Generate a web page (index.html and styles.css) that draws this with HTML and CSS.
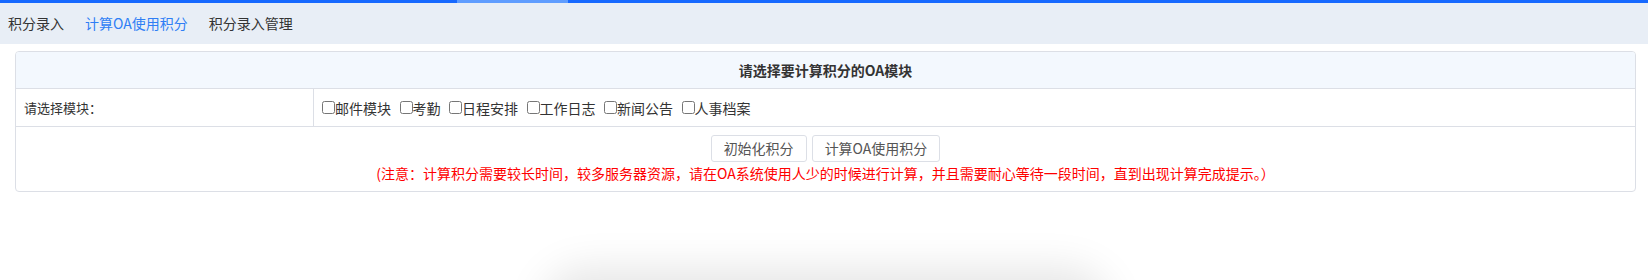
FILE: index.html
```html
<!DOCTYPE html>
<html lang="zh-CN">

<head>
	<meta charset="utf-8">
	<title>计算OA使用积分</title>
	<meta name="viewport" content="width=device-width, initial-scale=1">
	<link rel="stylesheet" href="styles.css">
</head>

<body>
	<div class="loadbar"></div>
	<nav class="tabs">
		<a href="#">积分录入</a>
		<a href="#" class="active">计算OA使用积分</a>
		<a href="#">积分录入管理</a>
	</nav>

	<div class="panel">
		<div class="panel-head">请选择要计算积分的OA模块</div>
		<div class="field-row">
			<div class="field-label">请选择模块：</div>
			<div class="field-value">
				<label><input type="checkbox">邮件模块</label>
				<label><input type="checkbox">考勤</label>
				<label><input type="checkbox">日程安排</label>
				<label><input type="checkbox">工作日志</label>
				<label><input type="checkbox">新闻公告</label>
				<label><input type="checkbox">人事档案</label>
			</div>
		</div>
		<div class="actions">
			<div class="buttons">
				<button type="button">初始化积分</button>
				<button type="button">计算OA使用积分</button>
			</div>
			<p class="notice">(注意：计算积分需要较长时间，较多服务器资源，请在OA系统使用人少的时候进行计算，并且需要耐心等待一段时间，直到出现计算完成提示。）</p>
		</div>
	</div>

	<div class="fold">
		<div class="fold-box"></div>
	</div>
</body>

</html>
```

FILE: styles.css
```css
*,
*::before,
*::after {
	box-sizing: border-box;
}

:root {
	--blue: #1769ff;
	--line: #dcdfe6;
	--text: #333;
}

body {
	margin: 0;
	font-family: "Noto Sans CJK SC", "Liberation Sans", sans-serif;
	font-size: 14px;
	color: var(--text);
	background: #fff;
	overflow: hidden;
}

/* top progress strip */
.loadbar {
	height: 3px;
	background: linear-gradient(to right,
			var(--blue) 457px,
			#5f9dff 457px 568px,
			var(--blue) 568px);
}

.tabs {
	display: flex;
	height: 41px;
	padding-left: 8px;
	background: #e8eef6;

	a {
		margin-right: 21px;
		line-height: 41px;
		color: var(--text);
		text-decoration: none;
	}

	.active {
		color: #2f7ef5;
	}
}

.panel {
	margin: 7px 12px 0 15px;
	border: 1px solid var(--line);
	border-radius: 4px;
	overflow: hidden;
}

.panel-head {
	height: 37px;
	line-height: 36px;
	border-bottom: 1px solid var(--line);
	background: #f3f8fe;
	text-align: center;
	font-weight: bold;
}

.field-row {
	display: grid;
	grid-template-columns: 298px 1fr;
	height: 38px;
	border-bottom: 1px solid var(--line);
}

.field-label {
	padding-left: 8px;
	border-right: 1px solid var(--line);
	font-size: 13px;
	line-height: 37px;
}

.field-value {
	display: flex;
	align-items: center;
	gap: 8.5px;
	padding-left: 8px;

	label {
		display: inline-flex;
		align-items: center;
		line-height: 20px;
	}

	input {
		width: 13px;
		height: 13px;
		margin: 0;
	}
}

.actions {
	padding: 8px 0;
	text-align: center;
}

.buttons {
	display: flex;
	justify-content: center;
	gap: 5px;

	button {
		height: 27px;
		padding: 0 12px;
		border: 1px solid var(--line);
		border-radius: 3px;
		background: #fff;
		color: #555;
		font: inherit;
		line-height: 25px;
		cursor: pointer;
	}
}

.notice {
	margin: 1px 0 0;
	line-height: 20px;
	color: #f00;
}

/* shadow of a box sitting just below the fold */
.fold {
	position: absolute;
	left: 0;
	right: 0;
	bottom: 0;
	height: 70px;
	overflow: hidden;
}

.fold-box {
	width: 540px;
	height: 100px;
	margin: 72px 0 0 556px;
	border-radius: 30px;
	background: #fff;
	box-shadow: 0 0 40px 14px rgba(0, 0, 0, 0.1);
}
```
